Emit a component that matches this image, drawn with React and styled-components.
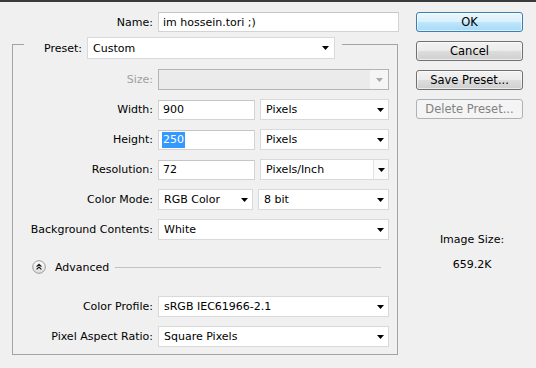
import React from "react";
import styled, { createGlobalStyle } from "styled-components";

const Global = createGlobalStyle`
  html, body {
    margin: 0;
    padding: 0;
    background: #f0f0f0;
  }
  body {
    font-family: "DejaVu Sans", "Liberation Sans", sans-serif;
    font-size: 11px;
    color: #000;
  }
`;

const Dialog = styled.div`
  width: 536px;
  height: 368px;
  box-sizing: border-box;
  border-top: 2px solid #3b3b3d;
  display: flex;
  overflow: hidden;
`;

const Left = styled.div`
  width: 400px;
  padding-top: 10px;
`;

const Right = styled.div`
  width: 107px;
  margin-left: 16px;
  padding-top: 10px;
  display: flex;
  flex-direction: column;
  gap: 9px;
`;

const Row = styled.div`
  display: flex;
  align-items: center;
  gap: 5px;
  height: ${({ $h }) => $h || 21}px;
`;

const Label = styled.div`
  width: ${({ $w }) => $w}px;
  flex: none;
  text-align: right;
  white-space: nowrap;
  color: ${({ $disabled }) => ($disabled ? "#a0a0a0" : "#000")};
`;

const Field = styled.div`
  box-sizing: border-box;
  width: ${({ $w }) => $w}px;
  height: 20px;
  background: #fff;
  border: 1px solid #d3d3d3;
  border-top-color: #c6c6c6;
  padding-left: 4px;
  display: flex;
  align-items: center;
  white-space: nowrap;
`;

const Selected = styled.span`
  background: #3399ff;
  color: #fff;
  padding: 1px 1px 2px;
  margin-left: -1px;
`;

const SelectBox = styled.div`
  box-sizing: border-box;
  width: ${({ $w }) => $w}px;
  height: ${({ $h }) => $h || 21}px;
  flex: none;
  background: ${({ $disabled }) => ($disabled ? "#ebebeb" : "#fff")};
  border: 1px solid ${({ $disabled }) => ($disabled ? "#b4b4b4" : "#d9d9d9")};
  display: flex;
  align-items: center;
  white-space: nowrap;
`;

const SelectText = styled.div`
  flex: 1;
  padding-left: 5px;
  overflow: hidden;
`;

const ArrowCell = styled.div`
  width: ${({ $w }) => $w || 14}px;
  height: 100%;
  display: flex;
  align-items: center;
  justify-content: center;
  box-sizing: border-box;
  background: ${({ $bg }) => $bg || "transparent"};
  border-left: ${({ $split }) => ($split ? "1px solid #e2e2e2" : "none")};
  margin-right: ${({ $mr }) => $mr || 0}px;
`;

const Arrow = ({ color = "#000" }) => (
  <svg width="7" height="4" viewBox="0 0 7 4">
    <path d="M0 0H7L3.5 4Z" fill={color} />
  </svg>
);

const Select = ({ w, h, children, split, disabled, arrowW, arrowMr }) => (
  <SelectBox $w={w} $h={h} $disabled={disabled}>
    <SelectText>{children}</SelectText>
    {disabled ? (
      <ArrowCell $w={18} $bg="#f5f5f5">
        <Arrow color="#a8a8a8" />
      </ArrowCell>
    ) : (
      <ArrowCell $split={split} $w={split ? 15 : arrowW} $bg={split ? "#fafafa" : undefined} $mr={arrowMr}>
        <Arrow />
      </ArrowCell>
    )}
  </SelectBox>
);

const Group = styled.fieldset`
  margin: 5px 0 0 12px;
  padding: 0;
  width: 386px;
  height: 318px;
  box-sizing: border-box;
  border: 1px solid #a3a3a3;
  min-inline-size: 0;
`;

const Legend = styled.legend`
  margin-left: 11px;
  padding: 0 7px 0 0;
  height: 14px;
  display: flex;
  align-items: flex-start;
  gap: 5px;
`;

const LegendLabel = styled.div`
  width: 58px;
  height: 22px;
  display: flex;
  align-items: center;
  justify-content: flex-end;
`;

const Rows = styled.div`
  display: flex;
  flex-direction: column;
  gap: 9px;
  padding-top: ${({ $pt }) => $pt || 0}px;
`;

const AdvancedRow = styled.div`
  display: flex;
  align-items: center;
  height: 20px;
  margin: 17px 16px 19px 19px;
`;

const AdvancedText = styled.span`
  margin: 0 6px 0 9px;
`;

const Rule = styled.div`
  flex: 1;
  height: 1px;
  background: #c2c2c2;
`;

const Button = styled.div`
  box-sizing: border-box;
  height: 20px;
  border-radius: 3px;
  display: flex;
  align-items: center;
  justify-content: center;
  font-size: 11.5px;
  border: 1px solid ${({ $kind }) => ($kind === "primary" ? "#3c7fb1" : $kind === "disabled" ? "#adb2b5" : "#707070")};
  color: ${({ $kind }) => ($kind === "disabled" ? "#838383" : "#000")};
  background: ${({ $kind }) =>
    $kind === "primary"
      ? "linear-gradient(#eaf6fd 0%, #d9f0fc 50%, #bee6fd 51%, #a7d9f5 100%)"
      : $kind === "disabled"
      ? "#f4f4f4"
      : "linear-gradient(#f2f2f2 0%, #ebebeb 50%, #dddddd 51%, #cfcfcf 100%)"};
  box-shadow: ${({ $kind }) => ($kind === "disabled" ? "none" : "inset 0 0 0 1px rgba(255,255,255,0.6)")};
`;

const Info = styled.div`
  margin-top: 105px;
  display: flex;
  flex-direction: column;
  align-items: center;
  gap: 11px;
  padding-left: 5px;
  line-height: 14px;
`;

const AdvancedIcon = () => (
  <svg width="14" height="14" viewBox="0 0 14 14">
    <defs>
      <linearGradient id="adv" x1="0" y1="0" x2="0" y2="1">
        <stop offset="0" stopColor="#ffffff" />
        <stop offset="1" stopColor="#dcdcdc" />
      </linearGradient>
    </defs>
    <circle cx="7" cy="7" r="6.3" fill="url(#adv)" stroke="#9a9a9a" strokeWidth="1" />
    <path d="M4.6 6.6L7 4.3L9.4 6.6M4.6 9.4L7 7.1L9.4 9.4" fill="none" stroke="#1a1a1a" strokeWidth="1.3" />
  </svg>
);

export default function App() {
  return (
    <>
      <Global />
      <Dialog>
        <Left>
          <Row $h={20}>
            <Label $w={153}>Name:</Label>
            <Field $w={241}>im hossein.tori ;)</Field>
          </Row>
          <Group>
            <Legend>
              <LegendLabel>Preset:</LegendLabel>
              <Select w={248} h={22} arrowMr={2}>
                Custom
              </Select>
            </Legend>
            <Rows $pt={18}>
              <Row>
                <Label $w={140} $disabled>
                  Size:
                </Label>
                <Select w={231} disabled />
              </Row>
              <Row>
                <Label $w={140}>Width:</Label>
                <Field $w={97}>900</Field>
                <Select w={129} arrowMr={1}>Pixels</Select>
              </Row>
              <Row>
                <Label $w={140}>Height:</Label>
                <Field $w={97}>
                  <Selected>250</Selected>
                </Field>
                <Select w={129} arrowMr={1}>Pixels</Select>
              </Row>
              <Row>
                <Label $w={140}>Resolution:</Label>
                <Field $w={97}>72</Field>
                <Select w={129} split>
                  Pixels/Inch
                </Select>
              </Row>
              <Row>
                <Label $w={140}>Color Mode:</Label>
                <Select w={95} arrowMr={1}>RGB Color</Select>
                <Select w={131} arrowMr={1}>8 bit</Select>
              </Row>
              <Row>
                <Label $w={140}>Background Contents:</Label>
                <Select w={231} arrowMr={1}>White</Select>
              </Row>
            </Rows>
            <AdvancedRow>
              <AdvancedIcon />
              <AdvancedText>Advanced</AdvancedText>
              <Rule />
            </AdvancedRow>
            <Rows>
              <Row>
                <Label $w={140}>Color Profile:</Label>
                <Select w={231} arrowMr={1}>sRGB IEC61966-2.1</Select>
              </Row>
              <Row>
                <Label $w={140}>Pixel Aspect Ratio:</Label>
                <Select w={231} arrowMr={1}>Square Pixels</Select>
              </Row>
            </Rows>
          </Group>
        </Left>
        <Right>
          <Button $kind="primary">OK</Button>
          <Button>Cancel</Button>
          <Button>Save Preset...</Button>
          <Button $kind="disabled">Delete Preset...</Button>
          <Info>
            <div>Image Size:</div>
            <div>659.2K</div>
          </Info>
        </Right>
      </Dialog>
    </>
  );
}
